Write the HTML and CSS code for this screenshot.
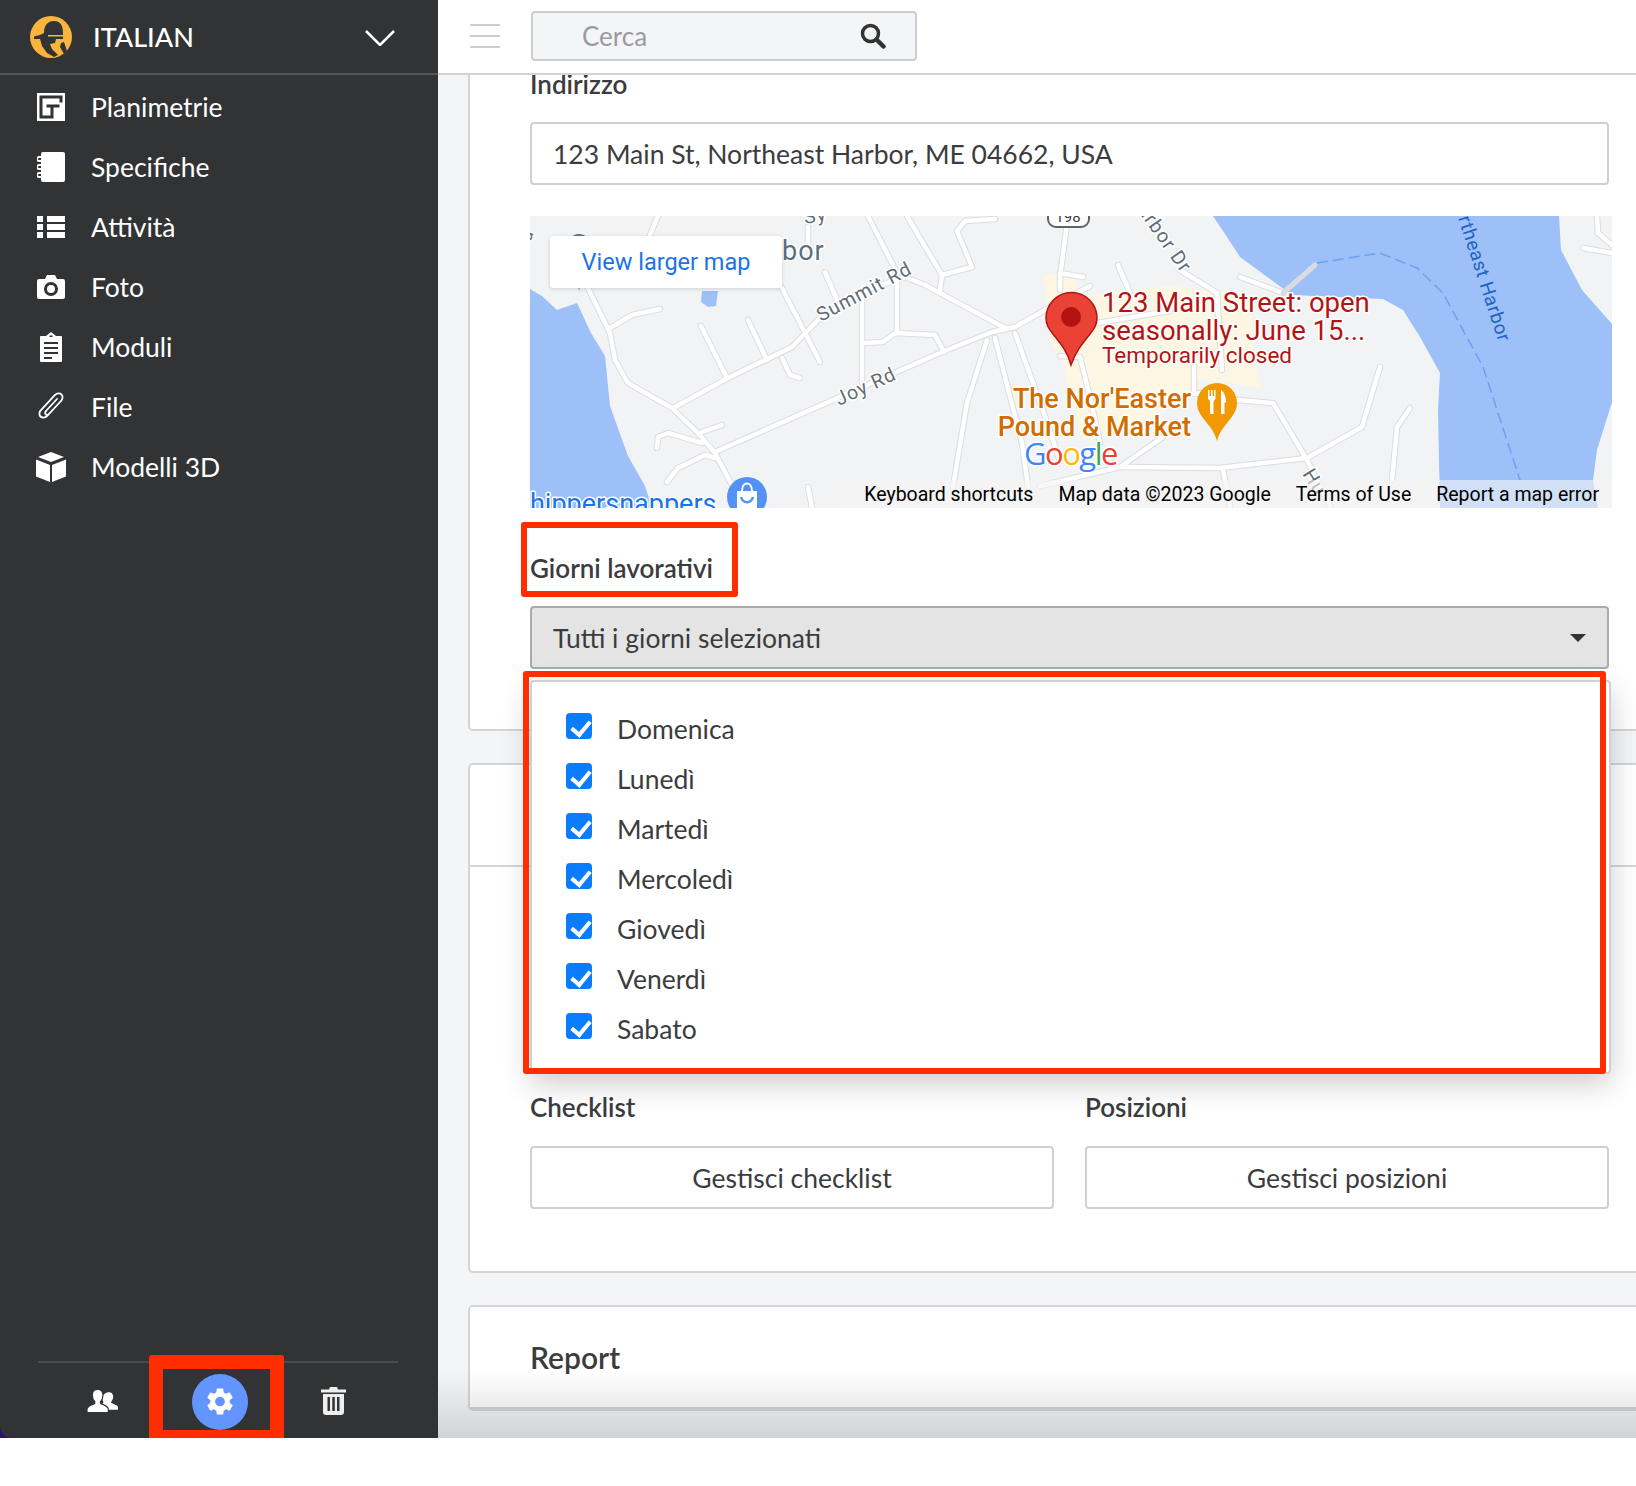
FILE: index.html
```html
<!DOCTYPE html>
<html lang="it">
<head>
    <meta charset="UTF-8">
    <title>Impostazioni progetto</title>
    <link rel="stylesheet" href="styles.css">
</head>
<body>

<div class="app">
    <!-- Sidebar -->
    <aside class="sidebar">
        <div class="sidebar-panel">
            <div class="project">
                <svg class="project-logo" viewBox="0 0 42 42">
                    <circle cx="21" cy="21" r="21" fill="#f9b43d"/>
                    <path fill="#323335" d="M14 17c0-8 4-12 10-12s9 4 9 12v2H18v1.500h15V23H4v-2.500c3-1 7-1.500 10-3.500z"/>
                    <path fill="#323335" d="M10 23h16l-1 4-5 1 2 5 6 6-4 2-7-4-5-7z"/>
                    <path fill="#323335" d="M31 27l3-1 3 9-3 3-4-7z"/>
                </svg>
                <span class="project-name">ITALIAN</span>
                <svg class="project-chevron" viewBox="0 0 30 16">
                    <path d="M1 1l14 14L29 1" fill="none" stroke="#fff" stroke-width="2.500"/>
                </svg>
            </div>

            <nav class="nav">
                <a class="nav-item">
                    <svg class="nav-icon" viewBox="0 0 28 28">
                        <rect y="0" width="28" height="28" fill="#fff"/>
                        <path fill="#323335" d="M2.500 2.500h23v7h-3v-4h-17v17h8v-8h-4v-3h13v3h-6v11h-14z"/>
                    </svg>
                    Planimetrie
                </a>
                <a class="nav-item">
                    <svg class="nav-icon" viewBox="0 0 28 30">
                        <rect x="4" width="24" height="30" rx="2" fill="#fff"/>
                        <path d="M6 5H2a1.500 1.500 0 0 0 0 4h4M6 13H2a1.500 1.500 0 0 0 0 4h4M6 21H2a1.500 1.500 0 0 0 0 4h4" fill="none" stroke="#fff" stroke-width="1.800"/>
                    </svg>
                    Specifiche
                </a>
                <a class="nav-item">
                    <svg class="nav-icon" viewBox="0 0 28 22">
                        <path fill="#fff" d="M0 0h6v6H0zM10 0h18v6H10zM0 8h6v6H0zM10 8h18v6H10zM0 16h6v6H0zM10 16h18v6H10z"/>
                    </svg>
                    Attività
                </a>
                <a class="nav-item">
                    <svg class="nav-icon" viewBox="0 0 28 24">
                        <path fill="#fff" d="M2 4h6l2-4h8l2 4h6a2 2 0 0 1 2 2v16a2 2 0 0 1-2 2H2a2 2 0 0 1-2-2V6a2 2 0 0 1 2-2z"/>
                        <circle cx="14" cy="14" r="5.500" fill="none" stroke="#323335" stroke-width="3"/>
                    </svg>
                    Foto
                </a>
                <a class="nav-item">
                    <svg class="nav-icon nav-icon-form" viewBox="0 0 22 30">
                        <path fill="#fff" d="M1 4h5l5-4 5 4h5a1 1 0 0 1 1 1v24a1 1 0 0 1-1 1H1a1 1 0 0 1-1-1V5a1 1 0 0 1 1-1z"/>
                        <path fill="#323335" d="M9.500 3.500h3v1.500h-3zM4 10h14v2H4zM4 15h14v2H4zM4 20h14v2H4zM4 25h8v2H4z"/>
                    </svg>
                    Moduli
                </a>
                <a class="nav-item">
                    <svg class="nav-icon" viewBox="0 0 28 30">
                        <path d="M24 9L10 24c-2 2-5 2-6.500.500S2 20 4 18L18 3c2-2 5-2 6.500-.500S26 7 24 9L12 22c-1 1-2.500 1-3.300.300s-.7-2.300.300-3.300L20 7" fill="none" stroke="#fff" stroke-width="1.800" stroke-linecap="round"/>
                    </svg>
                    File
                </a>
                <a class="nav-item">
                    <svg class="nav-icon nav-icon-cube" viewBox="0 0 30 30">
                        <path fill="#fff" d="M15 0l13 5-13 5L2 5zM0 7.500l14 5.500v17L0 24.500zM30 7.500L16 13v17l14-5.500z"/>
                    </svg>
                    Modelli 3D
                </a>
            </nav>

            <div class="sidebar-footer">
                <a class="footer-item">
                    <svg class="icon-users" viewBox="0 0 32 24">
                        <path fill="#fff" d="M23 3c2.500 0 4 2 4 4.500 0 2-1 4-2 5v1.500c2 1 7 2 7 4.500V21H22c0-3-3-4.500-6-6l1-2c-1-1.500-1-3-1-4.500C16 5 20 3 23 3z"/>
                        <path fill="#fff" stroke="#323335" stroke-width="1.200" d="M11 0c3.500 0 5.500 2.800 5.500 6 0 2.500-1 5-2.500 6.500v2c3 1.500 8 2.500 8 6V24H0v-3.500c0-3.500 5-4.500 8-6v-2C6.500 11 5.500 8.500 5.500 6 5.500 2.800 7.500 0 11 0z"/>
                    </svg>
                </a>
                <a class="footer-item footer-item-active">
                    <svg class="icon-gear" viewBox="2.500 2 19 20">
                        <path fill="#fff" d="M19.140 12.940c.04-.3.060-.61.060-.94 0-.32-.02-.64-.07-.94l2.030-1.580c.18-.14.23-.41.120-.61l-1.920-3.320c-.12-.22-.37-.29-.59-.22l-2.390.96c-.5-.38-1.030-.7-1.620-.94l-.36-2.540c-.04-.24-.24-.41-.48-.41h-3.840c-.24 0-.43.17-.47.41l-.36 2.540c-.59.24-1.130.57-1.620.94l-2.390-.96c-.22-.08-.47 0-.59.22L2.740 8.870c-.12.21-.08.47.12.61l2.030 1.580c-.05.3-.09.63-.09.94s.02.64.07.94l-2.030 1.580c-.18.14-.23.41-.12.61l1.920 3.320c.12.22.37.29.59.22l2.390-.96c.5.38 1.030.7 1.620.94l.36 2.540c.05.24.24.41.48.41h3.840c.24 0 .44-.17.47-.41l.36-2.540c.59-.24 1.130-.56 1.620-.94l2.390.96c.22.08.47 0 .59-.22l1.920-3.320c.12-.22.070-.47-.12-.61l-2.010-1.580zM12 15.600c-1.980 0-3.600-1.620-3.600-3.600s1.620-3.600 3.600-3.600 3.600 1.620 3.600 3.600-1.620 3.600-3.600 3.600z"/>
                    </svg>
                </a>
                <a class="footer-item">
                    <svg class="icon-trash" viewBox="0 0 25 29">
                        <path fill="#eee" d="M0 3.500h8L9 1h7l1 2.500h8V6.500H0zM2 8h21v18a3 3 0 0 1-3 3H5a3 3 0 0 1-3-3z"/>
                        <path fill="#323335" d="M6.500 11h2.500v14H6.500zM11.300 11h2.500v14h-2.500zM16 11h2.500v14H16z"/>
                    </svg>
                </a>
            </div>
        </div>
    </aside>

    <!-- Main column -->
    <main class="main">
        <header class="topbar">
            <button class="menu-toggle"><span></span><span></span><span></span></button>
            <div class="search">
                <span class="search-text">Cerca</span>
                <svg class="search-icon" viewBox="0 0 26 26">
                    <circle cx="10.500" cy="10.500" r="8" fill="none" stroke="#333" stroke-width="3.500"/>
                    <path d="M16.500 16.500l7 7" stroke="#333" stroke-width="4.500" stroke-linecap="round"/>
                </svg>
            </div>
        </header>

        <div class="content">
            <section class="card card-address">
                <label class="field-label label-address">Indirizzo</label>
                <div class="text-input">123 Main St, Northeast Harbor, ME 04662, USA</div>

                <div class="map">
                    <svg class="map-canvas" viewBox="0 0 1082 292">
                        <defs>
                            <g id="roads">
                                <path d="M58 72L80 117 85 144 98 167 142 192 168 217 185 237 203 271"/>
                                <path d="M145 191L198 162 262 131 288 104 328 77 375 61 395 69 475 112"/>
                                <path d="M185 236L412 136 462 116 485 111 515 94 560 70"/>
                                <path d="M80 112L102 99 130 93"/>
                                <path d="M171 110L197 162"/>
                                <path d="M218 104L237 144"/>
                                <path d="M252 142L260 159 270 162"/>
                                <path d="M252 72L290 146"/>
                                <path d="M295 56L307 84"/>
                                <path d="M332 77V167"/>
                                <path d="M333 127L353 126 365 117 405 119 414 136"/>
                                <path d="M367 61V117"/>
                                <path d="M338 0L367 57"/>
                                <path d="M377 0L412 59 410 74"/>
                                <path d="M412 59L442 51 427 15 435 5 465 3"/>
                                <path d="M128 0L120 19"/>
                                <path d="M278 11V28"/>
                                <path d="M127 232L128 221 138 217 172 227"/>
                                <path d="M172 216L192 209"/>
                                <path d="M137 266L148 252 175 239 185 242"/>
                                <path d="M457 124L437 187 423 271"/>
                                <path d="M465 122L492 227 498 271"/>
                                <path d="M485 117L515 200 530 245"/>
                                <path d="M278 271L282 292"/>
                                <path d="M538 0L530 61V74"/>
                                <path d="M530 57L553 61"/>
                                <path d="M530 140L550 141 560 181 570 227"/>
                                <path d="M567 107L640 95"/>
                                <path d="M650 54L687 77 692 154"/>
                                <path d="M588 49L600 77"/>
                                <path d="M710 61L753 77"/>
                                <path d="M664 150V178L690 175"/>
                                <path d="M708 184L743 187 777 244"/>
                                <path d="M777 242L832 211 850 151"/>
                                <path d="M590 251L690 252 777 242"/>
                                <path d="M590 251L633 221"/>
                                <path d="M880 192L867 211 862 264"/>
                                <path d="M777 244L800 290"/>
                                <path d="M693 254L700 290"/>
                                <path d="M510 270L590 251"/>
                                <path d="M1082 37L1053 32"/>
                                <path d="M1067 0L1068 17 1082 29"/>
                            </g>
                        </defs>

                        <rect width="1082" height="292" fill="#f2f3f5"/>
                        <path class="water" d="M683 0L697 21 710 41 755 74 763 79 853 83 873 94 890 121 910 157 908 194 910 292H1068L1063 264 1067 234 1082 186V108L1052 74 1031 34 1029 0z"/>
                        <path class="water" d="M0 73L12 80 27 94 47 87 61 117 75 140 80 190 98 240 115 270 122 292H0z"/>
                        <path class="water" d="M172 75H188L186 90 178 91 171 86z"/>
                        <path class="built" d="M513 58L545 60 548 80 640 70 720 80 725 150 732 172 700 167 660 163 665 180 580 220 552 225 532 145 520 125z"/>

                        <use href="#roads" class="road-case"/>
                        <use href="#roads" class="road-fill"/>
                        <path class="pier" d="M753 77L785 49"/>
                        <path class="boat-route" d="M787 47L850 37 887 52 913 77 953 151 990 264"/>

                        <path d="M49 18c-7 0-11 5-11 14 0 10 8 24 11 43 3-19 11-33 11-43 0-9-4-14-11-14z" fill="#5b7586"/>
                        <rect class="shield" x="518" y="-12" width="41" height="23" rx="8"/>
                        <text class="map-shield-text" x="538" y="6">198</text>

                        <text class="map-road" x="0" y="27" transform="rotate(-70 0 27)">d</text>
                        <text class="map-place" x="252" y="44">bor</text>
                        <text class="map-road" x="275" y="8" transform="rotate(-10 275 8)">Sy</text>
                        <text class="map-road" x="291" y="106" transform="rotate(-28 291 106)">Summit Rd</text>
                        <text class="map-road" x="309" y="190" transform="rotate(-25 309 190)">Joy Rd</text>
                        <text class="map-road" x="607" y="-6" transform="rotate(55 607 -6)">arbor Dr</text>
                        <text class="map-road" x="772" y="258" transform="rotate(58 772 258)">Hu</text>
                        <text class="map-water" x="928" y="2" transform="rotate(72 928 2)">rtheast Harbor</text>

                        <text class="map-pin-title" x="572" y="96">123 Main Street: open</text>
                        <text class="map-pin-title" x="572" y="124">seasonally: June 15...</text>
                        <text class="map-pin-note" x="572" y="147">Temporarily closed</text>
                        <text class="map-poi" x="661" y="192" text-anchor="end">The Nor'Easter</text>
                        <text class="map-poi" x="661" y="220" text-anchor="end">Pound &amp; Market</text>
                        <text class="map-shop" x="0" y="297">hippersnappers</text>
                        <text class="map-google" x="494" y="249"><tspan fill="#4285f4">G</tspan><tspan fill="#ea4335">o</tspan><tspan fill="#fbbc05">o</tspan><tspan fill="#4285f4">g</tspan><tspan fill="#34a853">l</tspan><tspan fill="#ea4335">e</tspan></text>

                        <!-- Red pin -->
                        <path d="M541 149c-4-14-10-21-18-31-4-5-7-9-7-16a25.500 25.500 0 0 1 51 0c0 7-3 11-7 16-8 10-14 17-19 31z" fill="#ea4335" stroke="#b31412" stroke-width="1.500"/>
                        <circle cx="541" cy="101" r="10" fill="#b31412"/>
                        <!-- Restaurant pin -->
                        <path d="M687 225c-3-11-8-15-14-23-3-4-6-9-6-15a20 20 0 0 1 40 0c0 6-3 11-6 15-6 8-11 12-14 23z" fill="#f29900"/>
                        <path d="M678 174h1.500v6h1.500v-6h1.500v6h1.500v-6h1.500v9l-2 2v13h-3.500v-13l-2-2z" fill="#fff"/>
                        <path d="M691 198v-24c3 2 5 6 5 12l-1.500 1v11z" fill="#fff"/>
                        <!-- Shop pin -->
                        <circle cx="217" cy="281" r="20" fill="#5491f5"/>
                        <path d="M207 275h20v17h-20z" fill="#fff"/>
                        <path d="M212 275c0-10 10-10 10 0" fill="none" stroke="#fff" stroke-width="2"/>
                        <path d="M211 281c2 7 10 7 12 0" fill="none" stroke="#5491f5" stroke-width="2.500"/>
                    </svg>

                    <a class="map-link">View larger map</a>
                    <div class="map-credits">
                        <span>Keyboard shortcuts</span>
                        <span>Map data ©2023 Google</span>
                        <span>Terms of Use</span>
                        <span>Report a map error</span>
                    </div>
                </div>

                <label class="field-label label-days">Giorni lavorativi</label>
                <div class="select">
                    <span>Tutti i giorni selezionati</span>
                    <span class="select-arrow"></span>
                </div>
            </section>

            <section class="card">
                <div class="card-header"></div>
                <div class="card-body">
                    <div class="hidden-select"></div>
                    <div class="two-cols">
                        <div>
                            <label class="field-label">Checklist</label>
                            <button class="manage-button">Gestisci checklist</button>
                        </div>
                        <div>
                            <label class="field-label">Posizioni</label>
                            <button class="manage-button">Gestisci posizioni</button>
                        </div>
                    </div>
                </div>
            </section>

            <section class="card">
                <div class="card-header">
                    <h2 class="card-title">Report</h2>
                </div>
            </section>
        </div>

        <div class="bottom-fade"></div>

        <!-- Dropdown of working days -->
        <div class="days-panel">
            <label class="day"><span class="day-check"></span>Domenica</label>
            <label class="day"><span class="day-check"></span>Lunedì</label>
            <label class="day"><span class="day-check"></span>Martedì</label>
            <label class="day"><span class="day-check"></span>Mercoledì</label>
            <label class="day"><span class="day-check"></span>Giovedì</label>
            <label class="day"><span class="day-check"></span>Venerdì</label>
            <label class="day"><span class="day-check"></span>Sabato</label>
        </div>
    </main>

    <!-- Annotation boxes -->
    <div class="callout callout-label"></div>
    <div class="callout callout-days"></div>
    <div class="callout callout-gear"></div>
</div>

</body>
</html>
```

FILE: styles.css
```css
* {
    margin: 0;
    padding: 0;
    box-sizing: border-box;
}

body {
    font-family: 'Lato', 'Liberation Sans', sans-serif;
    background-color: #fff;
    color: #3b3c3e;
}

.app {
    position: relative;
    display: flex;
    width: 1636px;
    height: 1438px;
    overflow: visible;
}

/* Sidebar */
.sidebar {
    width: 438px;
    flex-shrink: 0;
    background-color: #2b1173;
}

.sidebar-panel {
    display: flex;
    flex-direction: column;
    height: 100%;
    background-color: #323335;
    border-bottom-left-radius: 12px;
    color: #fff;
}

.project {
    display: flex;
    align-items: center;
    height: 75px;
    padding: 0 43px 0 30px;
    border-bottom: 2px solid #55565a;
}

.project-logo {
    width: 42px;
    height: 42px;
    margin-right: 21px;
}

.project-name {
    font-size: 27px;
    font-weight: 500;
    flex: 1;
}

.project-chevron {
    width: 30px;
    height: 16px;
    margin-top: 3px;
}

.nav {
    display: flex;
    flex-direction: column;
    padding-top: 2px;
}

.nav-item {
    display: flex;
    align-items: center;
    height: 60px;
    padding-left: 37px;
    font-size: 26.500px;
}

.nav-icon {
    width: 28px;
    margin-right: 26px;
    flex-shrink: 0;
}

.nav-icon-form {
    width: 22px;
    margin: 0 29px 0 3px;
}

.nav-icon-cube {
    width: 30px;
    margin: 0 25px 0 -1px;
}

.sidebar-footer {
    display: flex;
    align-items: center;
    justify-content: space-between;
    margin: auto 40px 0 38px;
    height: 77px;
    border-top: 2px solid #4b4c4f;
    padding: 0 52px 0 49px;
}

.footer-item {
    display: flex;
    align-items: center;
    justify-content: center;
}

.footer-item-active {
    width: 56px;
    height: 56px;
    border-radius: 50%;
    background-color: #6495ff;
    margin-top: 2px;
}

.icon-users {
    width: 31px;
    height: 24px;
}

.icon-gear {
    width: 26px;
    height: 27px;
}

.icon-trash {
    width: 25px;
    height: 29px;
}

/* Top bar */
.main {
    position: relative;
    flex: 1;
    display: flex;
    flex-direction: column;
    min-width: 0;
    background-color: #f4f5f7;
}

.topbar {
    position: relative;
    z-index: 1;
    display: flex;
    align-items: center;
    height: 75px;
    flex-shrink: 0;
    padding: 0 0 1px 32px;
    background-color: #fff;
    border-bottom: 2px solid #d2d3d6;
}

.menu-toggle {
    display: flex;
    flex-direction: column;
    gap: 9px;
    width: 30px;
    margin-right: 31px;
    border: none;
    background: none;
}

.menu-toggle span {
    display: block;
    height: 2px;
    background-color: #cccdcf;
}

.search {
    display: flex;
    align-items: center;
    justify-content: space-between;
    width: 386px;
    height: 50px;
    padding: 0 29px 0 49px;
    background-color: #f4f5f6;
    border: 2px solid #cccdd0;
    border-radius: 4px;
}

.search-text {
    font-size: 26px;
    color: #9a9b9e;
}

.search-icon {
    width: 26px;
    height: 26px;
}

/* Content cards */
.content {
    flex: 1;
    padding-left: 30px;
    overflow: hidden;
}

.card {
    margin: 0 -20px 32px 0;
    padding: 0 45px 0 60px;
    background-color: #fff;
    border: 2px solid #d4d5d9;
    border-radius: 5px;
}

.card-address {
    margin-top: -30px;
    padding-top: 22px;
    padding-bottom: 60px;
}

.field-label {
    display: block;
    height: 30px;
    margin-bottom: 24px;
    font-size: 26px;
    font-weight: 600;
    line-height: 30px;
    color: #3b3c3e;
}

.label-address {
    margin-bottom: 23px;
}

.label-days {
    margin: 45px 0 23px;
}

.text-input {
    display: flex;
    align-items: center;
    height: 63px;
    padding: 0 21px;
    font-size: 26.500px;
    border: 2px solid #cfd0d4;
    border-radius: 4px;
}

.map {
    position: relative;
    width: 1082px;
    height: 292px;
    margin-top: 31px;
    overflow: hidden;
}

.map-canvas {
    display: block;
    width: 100%;
    height: 100%;
}

.water {
    fill: #9dc0f9;
}

.built {
    fill: #fdf6e3;
}

.road-case,
.road-fill {
    fill: none;
    stroke-linecap: round;
    stroke-linejoin: round;
}

.road-case {
    stroke: #dcdde0;
    stroke-width: 6.500;
}

.road-fill {
    stroke: #fff;
    stroke-width: 4.500;
}

.pier {
    stroke: #dadbde;
    stroke-width: 5;
    stroke-linecap: round;
}

.boat-route {
    fill: none;
    stroke: #6ea0ef;
    stroke-width: 1.500;
    stroke-dasharray: 11 5;
}

.shield {
    fill: #fff;
    stroke: #5f6368;
    stroke-width: 2;
}

.map-canvas text {
    font-family: 'Roboto', sans-serif;
    paint-order: stroke;
    stroke: #fff;
    stroke-width: 3px;
    stroke-linejoin: round;
}

.map-shield-text {
    font-size: 15px;
    text-anchor: middle;
    fill: #3c4043;
}

.map-road {
    font-size: 19.500px;
    letter-spacing: 1px;
    fill: #5f6c75;
}

.map-place {
    font-size: 27px;
    letter-spacing: 1px;
    fill: #56717f;
}

.map-water {
    font-size: 19px;
    letter-spacing: .6px;
    fill: #1e63c4;
    stroke: none !important;
}

.map-pin-title {
    font-size: 27.500px;
    fill: #b31412;
}

.map-pin-note {
    font-size: 22.500px;
    fill: #b31412;
}

.map-poi {
    font-size: 27px;
    font-weight: 500;
    fill: #d06c00;
}

.map-shop {
    font-size: 27px;
    fill: #1a73e8;
}

.map-google {
    font-family: 'Open Sans', sans-serif !important;
    font-size: 31px;
    letter-spacing: -1.500px;
}

.map-link {
    position: absolute;
    left: 20px;
    top: 20px;
    display: flex;
    align-items: center;
    justify-content: center;
    width: 232px;
    height: 52px;
    font-family: 'Roboto', sans-serif;
    font-size: 23.500px;
    color: #1a73e8;
    background-color: #fff;
    border-radius: 3px;
    box-shadow: 0 1px 4px rgba(0, 0, 0, 0.15);
}

.map-credits {
    position: absolute;
    left: 310px;
    right: 0;
    bottom: 0;
    display: flex;
    align-items: center;
    justify-content: flex-end;
    gap: 25px;
    height: 28px;
    padding-right: 13px;
    font-family: 'Roboto', sans-serif;
    font-size: 19.500px;
    color: #000;
    background-color: rgba(245, 245, 245, 0.6);
}

.select {
    display: flex;
    align-items: center;
    justify-content: space-between;
    height: 63px;
    padding: 0 21px;
    font-size: 26.500px;
    background-color: #e4e4e5;
    border: 2px solid #aaabad;
    border-radius: 4px;
}

.select-arrow {
    width: 0;
    height: 0;
    margin-right: 0;
    border-left: 8px solid transparent;
    border-right: 8px solid transparent;
    border-top: 8px solid #333;
}

.card-header {
    display: flex;
    align-items: center;
    height: 102px;
    margin: 0 -45px 0 -60px;
    padding-left: 60px;
    border-bottom: 2px solid #d4d5d9;
}

.card-title {
    font-size: 30px;
    font-weight: 600;
    color: #3b3c3e;
}

.card-body {
    padding-bottom: 62px;
}

.hidden-select {
    height: 58px;
    margin: 119px 0 48px;
    border: 2px solid #aaabad;
    border-radius: 4px;
}

.two-cols {
    display: grid;
    grid-template-columns: repeat(2, 1fr);
    gap: 31px;
}

.manage-button {
    display: block;
    width: 100%;
    height: 63px;
    font-family: inherit;
    font-size: 26.500px;
    color: #3b3c3e;
    background-color: #fff;
    border: 2px solid #cfd0d4;
    border-radius: 4px;
}

.bottom-fade {
    position: absolute;
    left: 0;
    right: 0;
    bottom: 0;
    height: 68px;
    background: linear-gradient(rgba(0, 0, 0, 0), rgba(0, 0, 0, 0.14));
    pointer-events: none;
}

/* Dropdown */
.days-panel {
    position: absolute;
    left: 92px;
    top: 680px;
    width: 1081px;
    height: 394px;
    padding-top: 22px;
    background-color: #fff;
    border: 2px solid #d0d0d2;
    border-radius: 4px;
    box-shadow: 0 10px 30px rgba(0, 0, 0, 0.2);
}

.day {
    display: flex;
    align-items: center;
    height: 50px;
    padding-left: 34px;
    font-size: 26.500px;
}

.day-check {
    position: relative;
    width: 26px;
    height: 26px;
    margin: -6px 25px 0 0;
    background-color: #0a7cff;
    border-radius: 4px;
}

.day-check::after {
    content: '';
    position: absolute;
    left: 9px;
    top: 4px;
    width: 8px;
    height: 15px;
    border-right: 4px solid #fff;
    border-bottom: 4px solid #fff;
    transform: rotate(40deg);
}

/* Annotation boxes */
.callout {
    position: absolute;
    border: 6px solid #ff2d00;
    border-radius: 3px;
}

.callout-label {
    left: 521px;
    top: 522px;
    width: 217px;
    height: 75px;
}

.callout-days {
    left: 523px;
    top: 671px;
    width: 1083px;
    height: 403px;
}

.callout-gear {
    left: 149px;
    top: 1355px;
    width: 135px;
    height: 89px;
    border-width: 14px;
}
```
